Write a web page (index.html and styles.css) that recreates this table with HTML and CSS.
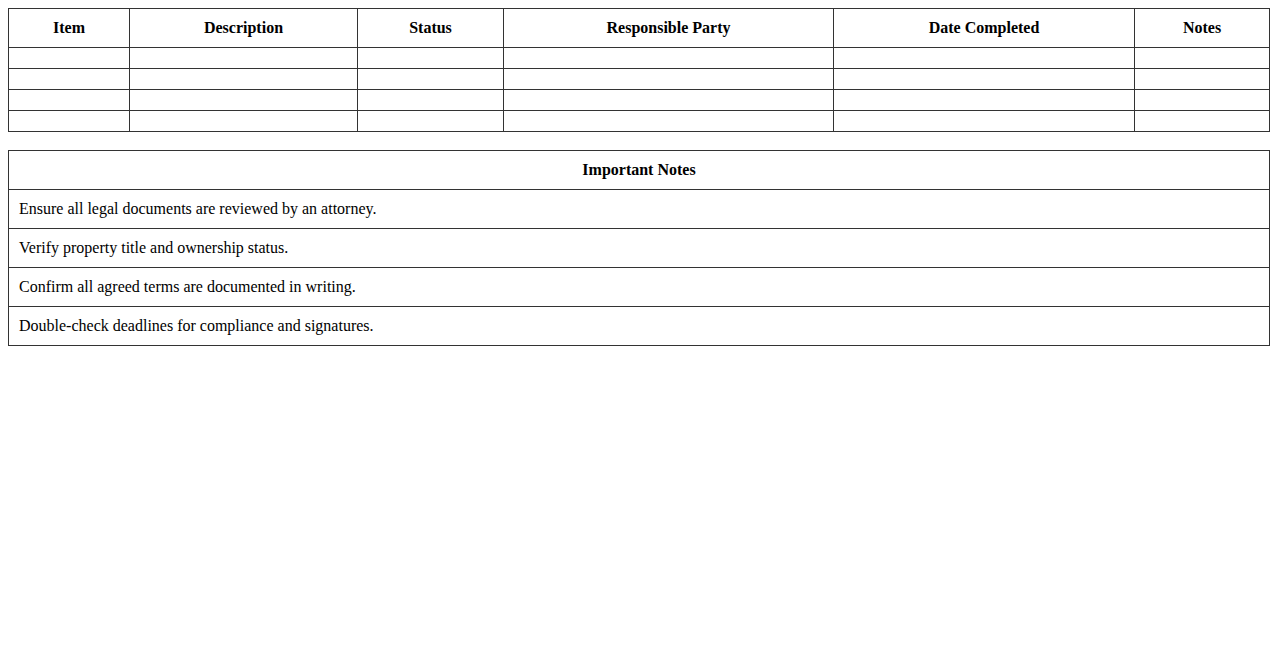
FILE: index.html
```html
<!DOCTYPE html>
<html>
<head>
<meta charset="utf-8">
<link rel="stylesheet" href="styles.css">
</head>
<body>
<table class="grid checklist">
  <colgroup>
    <col class="c-item"><col class="c-desc"><col class="c-status"><col class="c-party"><col class="c-date"><col class="c-notes">
  </colgroup>
  <thead>
    <tr><th>Item</th><th>Description</th><th>Status</th><th>Responsible Party</th><th>Date Completed</th><th>Notes</th></tr>
  </thead>
  <tbody>
    <tr><td></td><td></td><td></td><td></td><td></td><td></td></tr>
    <tr><td></td><td></td><td></td><td></td><td></td><td></td></tr>
    <tr><td></td><td></td><td></td><td></td><td></td><td></td></tr>
    <tr><td></td><td></td><td></td><td></td><td></td><td></td></tr>
  </tbody>
</table>
<table class="grid notes">
  <thead><tr><th>Important Notes</th></tr></thead>
  <tbody>
    <tr><td>Ensure all legal documents are reviewed by an attorney.</td></tr>
    <tr><td>Verify property title and ownership status.</td></tr>
    <tr><td>Confirm all agreed terms are documented in writing.</td></tr>
    <tr><td>Double-check deadlines for compliance and signatures.</td></tr>
  </tbody>
</table>
</body>
</html>
```
FILE: styles.css
```css
body {
  margin: 8px;
  font-family: "Liberation Serif", "Times New Roman", serif;
  font-size: 16px;
  color: #000;
  background: #fff;
}
.grid {
  width: 100%;
  border-collapse: collapse;
  table-layout: fixed;
}
.grid th, .grid td {
  border: 1px solid #333;
  padding: 10px;
  line-height: 18px;
}
.grid th {
  font-weight: bold;
  text-align: center;
}
.grid td {
  text-align: left;
}
.checklist {
  margin-bottom: 18px;
}
.c-item { width: 121px; }
.c-desc { width: 228px; }
.c-status { width: 146px; }
.c-party { width: 330px; }
.c-date { width: 301px; }
```
